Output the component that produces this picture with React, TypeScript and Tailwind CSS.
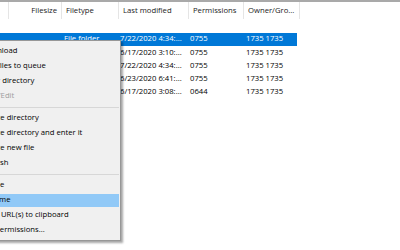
import React from "react";
import clsx from "clsx";

interface Entry {
  size: string;
  type: string;
  modified: string;
  perms: string;
  owner: string;
  selected?: boolean;
}

const entries: Array<Entry> = [
  { size: "", type: "", modified: "", perms: "", owner: "" },
  { size: "", type: "File folder", modified: "7/22/2020 4:34:...", perms: "0755", owner: "1735 1735", selected: true },
  { size: "", type: "File folder", modified: "6/17/2020 3:10:...", perms: "0755", owner: "1735 1735" },
  { size: "", type: "File folder", modified: "7/22/2020 4:34:...", perms: "0755", owner: "1735 1735" },
  { size: "", type: "File folder", modified: "6/23/2020 6:41:...", perms: "0755", owner: "1735 1735" },
  { size: "1,284", type: "PHP file", modified: "6/17/2020 3:08:...", perms: "0644", owner: "1735 1735" },
];

type MenuItem = { label: string; disabled?: boolean; active?: boolean } | "sep";

const menu: Array<MenuItem> = [
  { label: "Download" },
  { label: "Add files to queue" },
  { label: "Enter directory" },
  { label: "View/Edit", disabled: true },
  "sep",
  { label: "Create directory" },
  { label: "Create directory and enter it" },
  { label: "Create new file" },
  { label: "Refresh" },
  "sep",
  { label: "Delete" },
  { label: "Rename", active: true },
  { label: "Copy URL(s) to clipboard" },
  { label: "File permissions..." },
];

function HeaderCell({ w, label, right }: { w: string; label: string; right?: boolean }) {
  return (
    <div
      className={clsx(
        "h-full flex items-center border-r border-[#e5e5e5] whitespace-nowrap overflow-hidden px-[4px] shrink-0",
        w,
        right && "justify-end"
      )}
    >
      {label}
    </div>
  );
}

export default function App() {
  return (
    <div
      className="relative w-[400px] h-[250px] bg-white overflow-hidden text-[7.7px] text-black"
      style={{ fontFamily: '"Open Sans", "Noto Sans", sans-serif' }}
    >
      <div className="h-[2px] bg-[#a9a9a9]" />

      {/* column header */}
      <div className="flex h-[17.25px] text-[#222]">
        <HeaderCell w="w-[6px]" label="" />
        <HeaderCell w="w-[53px]" label="Filesize" right />
        <HeaderCell w="w-[57px]" label="Filetype" />
        <HeaderCell w="w-[70px]" label="Last modified" />
        <HeaderCell w="w-[55px]" label="Permissions" />
        <HeaderCell w="w-[56px]" label="Owner/Gro..." />
      </div>

      {/* listing */}
      <div className="flex flex-col">
        {entries.map((e, i) => (
          <div
            key={i}
            className={clsx(
              "flex h-[13.25px] items-center w-[297px] whitespace-nowrap",
              e.selected ? "bg-[#0078d7] text-white" : "text-black"
            )}
          >
            <div className="w-[6px] shrink-0" />
            <div className="w-[53px] shrink-0 text-right px-[4px] overflow-hidden">{e.size}</div>
            <div className="w-[57px] shrink-0 px-[5px] overflow-hidden">{e.type}</div>
            <div className="w-[70px] shrink-0 px-[4px] overflow-hidden">{e.modified}</div>
            <div className="w-[55px] shrink-0 px-[4px] overflow-hidden">{e.perms}</div>
            <div className="w-[56px] shrink-0 px-[5px] overflow-hidden">{e.owner}</div>
          </div>
        ))}
      </div>

      {/* context menu */}
      <div className="absolute left-[-60px] top-[40px] w-[181px] h-[201px] bg-[#f0f0f0] border border-[#979797] shadow-[2px_2px_2px_rgba(0,0,0,0.35)] pt-[2.5px] pr-[1px] text-[#000]">
        {menu.map((m, i) =>
          m === "sep" ? (
            <div key={i} className="h-[7px] flex items-center pl-[40px]">
              <div className="h-px w-full bg-[#d7d7d7]" />
            </div>
          ) : (
            <div key={i} className="h-[15px] py-[1px]">
              <div
                className={clsx(
                  "h-full flex items-center pl-[40px] whitespace-nowrap",
                  m.active && "bg-[#91c9f7]",
                  m.disabled && "text-[#9d9d9d]"
                )}
              >
                {m.label}
              </div>
            </div>
          )
        )}
      </div>
    </div>
  );
}
